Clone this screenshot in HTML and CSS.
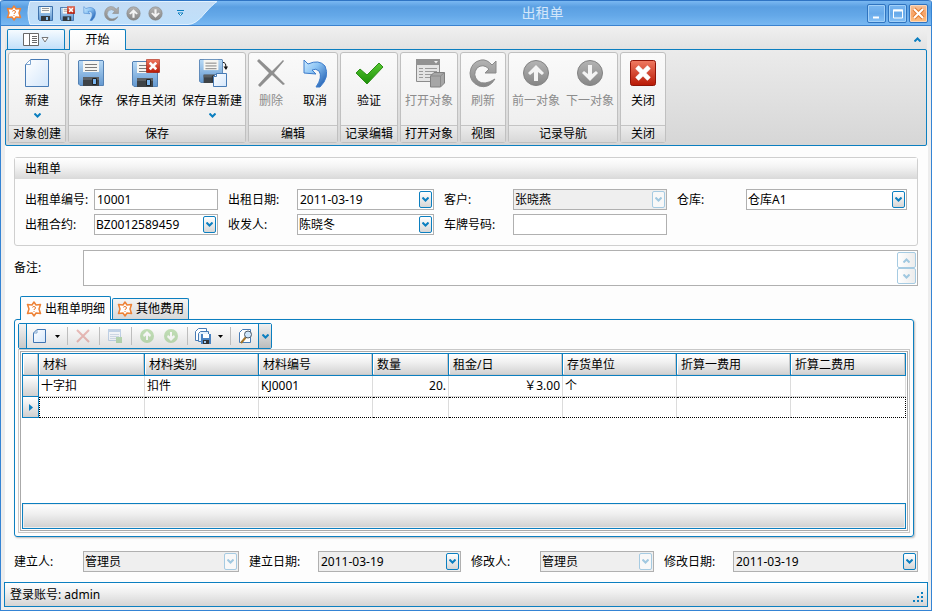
FILE: index.html
```html
<!DOCTYPE html>
<html lang="zh-CN">
<head>
    <meta charset="UTF-8">
    <meta name="viewport" content="width=device-width, initial-scale=1.0">
    <title>出租单</title>
    <link rel="stylesheet" href="styles.css">
</head>
<body>
    <svg class="sprite" aria-hidden="true">
        <defs>
            <linearGradient id="g-blue" x1="0" y1="0" x2="0" y2="1">
                <stop offset="0" stop-color="#b8daf6"/><stop offset="1" stop-color="#6398d0"/>
            </linearGradient>
            <linearGradient id="g-page" x1="0" y1="0" x2="1" y2="1">
                <stop offset="0" stop-color="#ffffff"/><stop offset="1" stop-color="#d3e6fb"/>
            </linearGradient>
            <linearGradient id="g-red" x1="0" y1="0" x2="0" y2="1">
                <stop offset="0" stop-color="#f07a62"/><stop offset="1" stop-color="#b81804"/>
            </linearGradient>
            <linearGradient id="g-gray" x1="0" y1="0" x2="0" y2="1">
                <stop offset="0" stop-color="#b4b4b4"/><stop offset="1" stop-color="#868686"/>
            </linearGradient>
            <linearGradient id="g-undo" x1="0" y1="0" x2="1" y2="1">
                <stop offset="0" stop-color="#d0ecff"/><stop offset=".4" stop-color="#8cc4f4"/><stop offset="1" stop-color="#1250a8"/>
            </linearGradient>
            <linearGradient id="g-green" x1="0" y1="0" x2="0" y2="1">
                <stop offset="0" stop-color="#58c832"/><stop offset="1" stop-color="#1c9008"/>
            </linearGradient>
            <linearGradient id="g-quick" x1="0" y1="0" x2="0" y2="1">
                <stop offset="0" stop-color="#c4dcf5"/><stop offset="1" stop-color="#bfe0fb"/>
            </linearGradient>
        </defs>
        <symbol id="i-disk" viewBox="0 0 26 26">
            <path d="M1 .5H25L25.5 1V25.5H2L.5 24V1Z" fill="url(#g-blue)" stroke="#5582b4"/>
            <path d="M5 1H21V12H5Z" fill="#f6f6f2"/>
            <path d="M7 4.500H19M7 7.500H19M7 10.500H19" stroke="#7c7c7c"/>
            <path d="M5 17H21V26H5Z" fill="#3e4347"/>
            <path d="M5 17H21V20H5Z" fill="#5b6064"/>
            <path d="M14.500 18.500H18.500V24.500H14.500Z" fill="#7ab6f0" stroke="#222"/>
        </symbol>
        <symbol id="i-disk-small" viewBox="0 0 15 15">
            <path d="M.5 .5H14.500V14.500H1.500L.5 13.500Z" fill="url(#g-blue)" stroke="#3f72ac"/>
            <path d="M3 1H12V7H3Z" fill="#fafaf6"/>
            <path d="M4 2.500H11M4 4.500H11" stroke="#9a9a9a"/>
            <path d="M3 10H12V15H3Z" fill="#33383d"/>
            <path d="M8 11H10V14H8Z" fill="#8cc4f4"/>
        </symbol>
        <symbol id="i-new" viewBox="0 0 32 32">
            <path d="M9.5 2.5H27.5V29.5H4.5V7.5Z" fill="url(#g-page)" stroke="#477bb5"/>
            <path d="M9.5 2.5V7.5H4.5Z" fill="#fff" stroke="#7da4cf"/>
        </symbol>
        <symbol id="i-redx" viewBox="0 0 26 26">
            <rect x=".5" y=".5" width="25" height="25" rx="2" fill="url(#g-red)" stroke="#8e1408"/>
            <path d="M7 7L19 19M19 7L7 19" stroke="#e8c9c6" stroke-width="5"/>
            <path d="M7 7L19 19M19 7L7 19" stroke="#fff" stroke-width="4"/>
        </symbol>
        <symbol id="i-save" viewBox="0 0 32 32">
            <use href="#i-disk" x="3" y="3" width="26" height="26"/>
        </symbol>
        <symbol id="i-save-close" viewBox="0 0 32 32">
            <use href="#i-disk" x="2" y="4" width="26" height="26"/>
            <use href="#i-redx" x="16" y="2" width="14" height="14"/>
        </symbol>
        <symbol id="i-save-new" viewBox="0 0 32 32">
            <use href="#i-disk" x="3" y="2" width="24" height="24"/>
            <path d="M20.5 16.5H30.5V29.5H17.5V19.5Z" fill="url(#g-page)" stroke="#477bb5"/>
            <path d="M20.5 16.5V19.5H17.5" fill="none" stroke="#477bb5"/>
            <path d="M27 5.5H28Q30 6 30 10V12" fill="none" stroke="#111"/>
            <path d="M27.5 9.5H32L30 13Z" fill="#111"/>
        </symbol>
        <symbol id="i-delete" viewBox="0 0 32 32">
            <path d="M4 2L17 14L28 3L29 4L19 16L30 27L28 28L17 18L5 30L3 28L14 16L2 4Z" fill="#8f8f8f"/>
        </symbol>
        <symbol id="i-undo" viewBox="0 0 32 32">
            <path d="M5 3L9 7Q20 2 26 9Q31 20 21 30H17Q24 20 20 14Q17 11 13 13L17 17L5 16Z" fill="url(#g-undo)" stroke="#3d7ccb"/>
        </symbol>
        <symbol id="i-check" viewBox="0 0 32 32">
            <path d="M3 16L7 12L14 18L26 6L30 10L14 27Z" fill="url(#g-green)" stroke="#2d8f18"/>
        </symbol>
        <symbol id="i-object" viewBox="0 0 32 32">
            <path d="M3.5 2.5H26.5V24.5H3.5Z" fill="#e4e4e4" stroke="#8c8c8c"/>
            <path d="M3 2H27V8H3Z" fill="#929292"/>
            <path d="M21 4H25L23 6.500Z" fill="#eee"/>
            <path d="M6 11.500H10M12 11.500H24M6 14.500H10M12 14.500H24M6 17.500H10M12 17.500H24M6 20.500H10M12 20.500H24" stroke="#9a9a9a"/>
            <path d="M17.500 19L21 15.500H31.500V26L27.500 30H17.500Z" fill="#a6a6a6" stroke="#808080"/>
            <path d="M17.500 19H27.500V30M27.500 19L31.500 15.500" fill="none" stroke="#8a8a8a"/>
        </symbol>
        <symbol id="i-refresh" viewBox="0 0 32 32">
            <path d="M29 4V16H18L22 12Q16 6 10 11Q5 18 11 24Q17 29 28 22Q22 32 12 29Q3 25 3 16Q4 5 14 3Q20 2 25 8Z" fill="url(#g-gray)" stroke="#8a8a8a"/>
        </symbol>
        <symbol id="i-up" viewBox="0 0 32 32">
            <circle cx="16" cy="16" r="12.500" fill="url(#g-gray)" stroke="#828282"/>
            <path d="M16 8L24 16L22 18L18 15V24H14V15L10 18L8 16Z" fill="#f4f4f4"/>
        </symbol>
        <symbol id="i-down" viewBox="0 0 32 32">
            <circle cx="16" cy="16" r="12.500" fill="url(#g-gray)" stroke="#828282"/>
            <path d="M16 24L24 16L22 14L18 17V8H14V17L10 14L8 16Z" fill="#f4f4f4"/>
        </symbol>
        <symbol id="i-close" viewBox="0 0 32 32">
            <use href="#i-redx" x="3" y="3" width="26" height="26"/>
        </symbol>
        <symbol id="i-star" viewBox="0 0 16 16">
            <path d="M8 1L10 4L14.500 3.500L13 8L14.500 12.500L10 12L8 15L6 12L1.500 12.500L3 8L1.500 3.500L6 4Z" fill="#fff" stroke="#ee8236" stroke-width="1.500" stroke-linejoin="round"/>
            <path d="M6.500 6.500Q6.500 5.500 8 5.500T9.500 7Q9.500 8 8 8.500V9M8 10V11" fill="none" stroke="#e87a30"/>
        </symbol>
        <symbol id="i-chevron" viewBox="0 0 7 5">
            <path d="M.5 .5L3.500 3.500L6.500 .5" fill="none" stroke="currentColor" stroke-width="2"/>
        </symbol>
        <symbol id="i-triangle" viewBox="0 0 5 3">
            <path d="M0 0H5L2.500 3Z" fill="currentColor"/>
        </symbol>
    </svg>

    <div class="window">
        <header class="titlebar">
            <svg class="icon-16 app-icon"><use href="#i-star"/></svg>
            <div class="quick">
                <svg class="quick-back" viewBox="0 0 191 24" aria-hidden="true">
                    <path d="M3 .5H190Q186 3 178 12Q169 23.500 161 23.500H3Q-1 12 3 .5Z" fill="url(#g-quick)" stroke="#e2f2ff"/>
                </svg>
                <button class="quick-button" title="保存"><svg width="15" height="15"><use href="#i-disk-small"/></svg></button>
                <button class="quick-button" title="保存且关闭">
                    <svg width="15" height="15" viewBox="0 0 15 15"><use href="#i-disk-small" y="1" width="14" height="14"/><use href="#i-redx" x="7" width="8" height="8"/></svg>
                </button>
                <button class="quick-button" title="取消"><svg class="quick-icon" viewBox="3 2 26 29"><use href="#i-undo" width="32" height="32"/></svg></button>
                <button class="quick-button" title="刷新" disabled><svg class="quick-icon" viewBox="2 2 28 28"><use href="#i-refresh" width="32" height="32"/></svg></button>
                <button class="quick-button" title="前一对象" disabled><svg class="quick-icon" viewBox="2 2 28 28"><use href="#i-up" width="32" height="32"/></svg></button>
                <button class="quick-button" title="下一对象" disabled><svg class="quick-icon" viewBox="2 2 28 28"><use href="#i-down" width="32" height="32"/></svg></button>
                <button class="quick-button quick-more" title="自定义">
                    <svg width="7" height="7" viewBox="0 0 7 7"><path d="M0 .5H7M1 3L3.500 5.500L6 3Z" fill="#fff" stroke="#0c7fc0"/></svg>
                </button>
            </div>
            <h1 class="title">出租单</h1>
            <div class="window-buttons">
                <button class="window-button" title="最小化">
                    <svg width="15" height="15"><path d="M4 11.500H10" stroke="#fff" stroke-width="2"/></svg>
                </button>
                <button class="window-button" title="最大化">
                    <svg width="15" height="15"><path d="M3.500 4H12.500V12H3.500Z" fill="none" stroke="#fff"/><path d="M3 4.500H13" stroke="#fff" stroke-width="2"/></svg>
                </button>
                <button class="window-button window-close" title="关闭">
                    <svg width="15" height="15"><path d="M3 3L12 12M12 3L3 12" stroke="#e07a30" stroke-width="4"/><path d="M3 3L12 12M12 3L3 12" stroke="#fff" stroke-width="2"/></svg>
                </button>
            </div>
        </header>

        <nav class="ribbon-tabs">
            <button class="app-menu" title="菜单">
                <svg width="16" height="13"><path d="M.5 .5H15.500V12.500H.5Z" fill="#fff" stroke="#686868"/><path d="M6.500 0V13M9 3.500H14M9 5.500H14M9 7.500H14M9 9.500H14" stroke="#686868"/></svg>
                <svg width="8" height="6"><path d="M1 .5H7L4 5Z" fill="#fff" stroke="#777"/></svg>
            </button>
            <button class="ribbon-tab">开始</button>
            <button class="collapse" title="折叠"><svg class="chevron flip"><use href="#i-chevron"/></svg></button>
        </nav>

        <section class="ribbon">
            <div class="ribbon-group">
                <div class="ribbon-items">
                    <button class="ribbon-button"><svg class="icon-32"><use href="#i-new"/></svg>新建<svg class="chevron"><use href="#i-chevron"/></svg></button>
                </div>
                <div class="ribbon-caption">对象创建</div>
            </div>
            <div class="ribbon-group">
                <div class="ribbon-items">
                    <button class="ribbon-button"><svg class="icon-32"><use href="#i-save"/></svg>保存</button>
                    <button class="ribbon-button"><svg class="icon-32"><use href="#i-save-close"/></svg>保存且关闭</button>
                    <button class="ribbon-button"><svg class="icon-32"><use href="#i-save-new"/></svg>保存且新建<svg class="chevron"><use href="#i-chevron"/></svg></button>
                </div>
                <div class="ribbon-caption">保存</div>
            </div>
            <div class="ribbon-group">
                <div class="ribbon-items">
                    <button class="ribbon-button" disabled><svg class="icon-32"><use href="#i-delete"/></svg>删除</button>
                    <button class="ribbon-button"><svg class="icon-32"><use href="#i-undo"/></svg>取消</button>
                </div>
                <div class="ribbon-caption">编辑</div>
            </div>
            <div class="ribbon-group">
                <div class="ribbon-items">
                    <button class="ribbon-button"><svg class="icon-32"><use href="#i-check"/></svg>验证</button>
                </div>
                <div class="ribbon-caption">记录编辑</div>
            </div>
            <div class="ribbon-group">
                <div class="ribbon-items">
                    <button class="ribbon-button" disabled><svg class="icon-32"><use href="#i-object"/></svg>打开对象</button>
                </div>
                <div class="ribbon-caption">打开对象</div>
            </div>
            <div class="ribbon-group">
                <div class="ribbon-items">
                    <button class="ribbon-button" disabled><svg class="icon-32"><use href="#i-refresh"/></svg>刷新</button>
                </div>
                <div class="ribbon-caption">视图</div>
            </div>
            <div class="ribbon-group">
                <div class="ribbon-items">
                    <button class="ribbon-button" disabled><svg class="icon-32"><use href="#i-up"/></svg>前一对象</button>
                    <button class="ribbon-button" disabled><svg class="icon-32"><use href="#i-down"/></svg>下一对象</button>
                </div>
                <div class="ribbon-caption">记录导航</div>
            </div>
            <div class="ribbon-group">
                <div class="ribbon-items">
                    <button class="ribbon-button"><svg class="icon-32"><use href="#i-close"/></svg>关闭</button>
                </div>
                <div class="ribbon-caption">关闭</div>
            </div>
        </section>

        <main class="content">
            <section class="group-box">
                <h2 class="group-title">出租单</h2>
                <div class="rent-fields">
                    <label class="label" for="number">出租单编号:</label>
                    <div class="editor"><input class="editor-value" type="text" id="number" value="10001"></div>
                    <label class="label" for="rent-date">出租日期:</label>
                    <div class="editor">
                        <input class="editor-value" type="text" id="rent-date" value="2011-03-19">
                        <button class="drop" title="选择日期"><svg class="chevron"><use href="#i-chevron"/></svg></button>
                    </div>
                    <label class="label" for="customer">客户:</label>
                    <div class="editor readonly off">
                        <select class="editor-value" id="customer" disabled><option>张晓燕</option></select>
                        <span class="drop"><svg class="chevron"><use href="#i-chevron"/></svg></span>
                    </div>
                    <label class="label" for="store">仓库:</label>
                    <div class="editor">
                        <select class="editor-value" id="store"><option>仓库A1</option></select>
                        <span class="drop"><svg class="chevron"><use href="#i-chevron"/></svg></span>
                    </div>
                    <label class="label" for="contract">出租合约:</label>
                    <div class="editor">
                        <select class="editor-value" id="contract"><option>BZ0012589459</option></select>
                        <span class="drop"><svg class="chevron"><use href="#i-chevron"/></svg></span>
                    </div>
                    <label class="label" for="sender">收发人:</label>
                    <div class="editor">
                        <select class="editor-value" id="sender"><option>陈晓冬</option></select>
                        <span class="drop"><svg class="chevron"><use href="#i-chevron"/></svg></span>
                    </div>
                    <label class="label" for="plate">车牌号码:</label>
                    <div class="editor"><input class="editor-value" type="text" id="plate"></div>
                </div>
            </section>

            <div class="memo-row">
                <label for="memo">备注:</label>
                <div class="memo">
                    <textarea class="memo-text" id="memo"></textarea>
                    <div class="memo-scroll">
                        <button class="memo-button" title="向上" disabled><svg class="chevron flip"><use href="#i-chevron"/></svg></button>
                        <button class="memo-button" title="向下" disabled><svg class="chevron"><use href="#i-chevron"/></svg></button>
                    </div>
                </div>
            </div>

            <div class="tabs">
                <button class="tab tab-active"><svg class="icon-16"><use href="#i-star"/></svg>出租单明细</button>
                <button class="tab"><svg class="icon-16"><use href="#i-star"/></svg>其他费用</button>
            </div>

            <section class="panel">
                <div class="toolbar">
                    <span class="toolbar-grip"></span>
                    <button class="tool" title="新建">
                        <svg class="icon-16" viewBox="0 0 16 16"><path d="M5 1.500H13.500V14.500H1.500V5Z" fill="url(#g-page)" stroke="#3f74b2"/><path d="M5 1.500V5H1.500" fill="none" stroke="#7da4cf"/></svg>
                    </button>
                    <button class="tool-drop" title="新建选项"><svg class="triangle"><use href="#i-triangle"/></svg></button>
                    <span class="toolbar-line"></span>
                    <button class="tool" title="删除" disabled>
                        <svg class="icon-16" viewBox="0 0 16 16"><path d="M2 2L14 14M14 2L2 14" stroke="#cc4a40" stroke-width="2"/></svg>
                    </button>
                    <span class="toolbar-line"></span>
                    <button class="tool" title="打开对象" disabled>
                        <svg class="icon-16" viewBox="0 0 16 16"><path d="M1.500 1.500H13.500V12.500H1.500Z" fill="#eef5ff" stroke="#5f8fca"/><path d="M1 2.500H14" stroke="#5f8fca" stroke-width="3"/><path d="M3 6.500H12M3 8.500H12M3 10.500H12" stroke="#8aa8cc"/><path d="M9 9H15V15H9Z" fill="#4aa238"/></svg>
                    </button>
                    <span class="toolbar-line"></span>
                    <button class="tool" title="前一对象" disabled>
                        <svg class="icon-16" viewBox="0 0 16 16"><circle cx="8" cy="8" r="7" fill="#5cae3c"/><path d="M8 3L12 7L11 9L9 7.500V12H7V7.500L5 9L4 7Z" fill="#fff"/></svg>
                    </button>
                    <button class="tool" title="下一对象" disabled>
                        <svg class="icon-16" viewBox="0 0 16 16"><circle cx="8" cy="8" r="7" fill="#5cae3c"/><path d="M8 13L12 9L11 7L9 8.500V4H7V8.500L5 7L4 9Z" fill="#fff"/></svg>
                    </button>
                    <span class="toolbar-line"></span>
                    <button class="tool" title="导出">
                        <svg class="icon-16" viewBox="0 0 16 16"><path d="M3.500 .5H11.500V12.500H.5V3.500Z" fill="#fff" stroke="#477bb5"/><path d="M5.500 3.500H13.500V13.500H3.500V5.500Z" fill="#e6f1fc" stroke="#477bb5"/><path d="M6 6H16V16H6Z" fill="#4a82c0"/><path d="M8 6H14V10H8Z" fill="#fff"/><path d="M8 12H14V16H8Z" fill="#333"/><path d="M9 13H11V15H9Z" fill="#9fc8f0"/></svg>
                    </button>
                    <button class="tool-drop" title="导出选项"><svg class="triangle"><use href="#i-triangle"/></svg></button>
                    <span class="toolbar-line"></span>
                    <button class="tool" title="预览">
                        <svg class="icon-16" viewBox="0 0 16 16"><path d="M4.500 1.500H12.500V14.500H1.500V4.500Z" fill="#fff" stroke="#477bb5"/><path d="M8 9L3 15" stroke="#a5752b" stroke-width="2"/><circle cx="10" cy="6.500" r="3.500" fill="#cfe6fb" stroke="#4d5865"/></svg>
                    </button>
                    <button class="toolbar-more" title="更多"><svg class="chevron"><use href="#i-chevron"/></svg></button>
                </div>

                <div class="grid-frame">
                    <div class="grid">
                        <div class="grid-rows">
                            <table class="grid-table">
                                <colgroup>
                                    <col class="col-mark"><col class="col-item"><col class="col-wide"><col class="col-wide">
                                    <col class="col-count"><col class="col-wide"><col class="col-wide"><col class="col-wide"><col>
                                </colgroup>
                                <thead>
                                    <tr>
                                        <th></th><th>材料</th><th>材料类别</th><th>材料编号</th><th>数量</th><th>租金/日</th><th>存货单位</th><th>折算一费用</th><th>折算二费用</th>
                                    </tr>
                                </thead>
                                <tbody>
                                    <tr>
                                        <td class="mark"></td><td>十字扣</td><td>扣件</td><td>KJ0001</td><td class="num">20.</td><td class="num">￥3.00</td><td>个</td><td></td><td></td>
                                    </tr>
                                    <tr class="focused">
                                        <td class="mark"><svg class="pointer" width="4" height="7"><path d="M0 0L4 3.500L0 7Z" fill="#0c7fc0"/></svg></td><td></td><td></td><td></td><td></td><td></td><td></td><td></td><td></td>
                                    </tr>
                                </tbody>
                            </table>
                        </div>
                        <div class="grid-footer"></div>
                    </div>
                </div>
            </section>

            <section class="audit-fields">
                <label for="creator">建立人:</label>
                <div class="editor readonly off">
                    <select class="editor-value" id="creator" disabled><option>管理员</option></select>
                    <span class="drop"><svg class="chevron"><use href="#i-chevron"/></svg></span>
                </div>
                <label class="label" for="created">建立日期:</label>
                <div class="editor readonly">
                    <input class="editor-value" type="text" id="created" value="2011-03-19" readonly>
                    <button class="drop" title="选择日期"><svg class="chevron"><use href="#i-chevron"/></svg></button>
                </div>
                <label class="label" for="editor">修改人:</label>
                <div class="editor readonly off">
                    <select class="editor-value" id="editor" disabled><option>管理员</option></select>
                    <span class="drop"><svg class="chevron"><use href="#i-chevron"/></svg></span>
                </div>
                <label class="label" for="edited">修改日期:</label>
                <div class="editor readonly">
                    <input class="editor-value" type="text" id="edited" value="2011-03-19" readonly>
                    <button class="drop" title="选择日期"><svg class="chevron"><use href="#i-chevron"/></svg></button>
                </div>
            </section>
        </main>

        <footer class="status">
            <span>登录账号: admin</span>
            <svg class="size-grip" width="11" height="11"><path d="M8 0h2v2h-2zM4 4h2v2h-2zM8 4h2v2h-2zM0 8h2v2h-2zM4 8h2v2h-2zM8 8h2v2h-2z" fill="#0c7fc0"/></svg>
        </footer>
    </div>
</body>
</html>
```
FILE: styles.css
```css
*
{
    box-sizing: border-box;
}

body
{
    margin: 0;
    font-family: "Noto Sans", "Noto Sans CJK SC", sans-serif;
    font-size: 12px;
    line-height: 16px;
    color: #000;
}

button, input, select, textarea
{
    font: inherit;
    color: inherit;
    margin: 0;
    padding: 0;
    border: none;
    background: none;
}

button
{
    display: flex;
    align-items: center;
    justify-content: center;
}

h1, h2
{
    margin: 0;
    font-weight: normal;
}

.sprite
{
    position: absolute;
    width: 0;
    height: 0;
}

.icon-16
{
    width: 16px;
    height: 16px;
    flex: none;
}

.icon-32
{
    width: 32px;
    height: 32px;
    flex: none;
    margin-bottom: 4px;
}

.chevron
{
    width: 7px;
    height: 5px;
    color: #0c7fc0;
    flex: none;
}

.flip
{
    transform: scaleY(-1);
}

.triangle
{
    width: 5px;
    height: 3px;
}

.window
{
    display: flex;
    flex-direction: column;
    min-height: 100vh;
    border: 1px solid #3584d4;
    border-top: none;
    border-radius: 3px 3px 0 0;
    background: #ededed;
}

/* title bar */

.titlebar
{
    display: flex;
    align-items: center;
    height: 26px;
    padding: 0 3px 0 5px;
    border-top: 1px solid #2f74c4;
    border-bottom: 1px solid #3b82cf;
    border-radius: 3px 3px 0 0;
    background: linear-gradient(#7ab8f2, #5a9fe2 25%, #64a8e8 60%, #78b8f2);
}

.quick
{
    position: relative;
    display: flex;
    align-items: center;
    width: 191px;
    height: 24px;
    margin-left: 5px;
    padding-left: 7px;
}

.quick-back
{
    position: absolute;
    left: 0;
    top: 0;
    width: 191px;
    height: 24px;
}

.quick-button
{
    position: relative;
    width: 22px;
    height: 22px;
}

.quick-icon
{
    width: 15px;
    height: 15px;
}

.quick-more
{
    margin-left: 3px;
}

.title
{
    flex: 1;
    text-align: center;
    font-size: 14px;
    line-height: 20px;
    color: #d2e6fa;
}

.window-buttons
{
    display: flex;
    gap: 2px;
}

.window-button
{
    width: 19px;
    height: 19px;
    border: 1px solid #2f74c0;
    border-radius: 2px;
    background: linear-gradient(#7ab6f0, #68aaea 50%, #84c0f6);
    box-shadow: inset 0 0 0 1px #a2d0f8;
}

.window-close
{
    background: linear-gradient(#f4c4a0, #f8a468 50%, #ffc080);
    box-shadow: inset 0 0 0 1px #fbd8bc;
}

/* ribbon */

.ribbon-tabs
{
    display: flex;
    align-items: flex-end;
    gap: 4px;
    height: 24px;
    margin: 0 4px -1px;
    padding-left: 2px;
    background: linear-gradient(#f0f0f0, #e2e2e2);
}

.app-menu
{
    gap: 2px;
    width: 58px;
    height: 20px;
    margin-bottom: 1px;
    border: 1px solid #0c7fc0;
    border-bottom: none;
    border-radius: 2px 2px 0 0;
    background: linear-gradient(#f6fbff, #c2e0fa);
}

.ribbon-tab
{
    position: relative;
    width: 57px;
    height: 21px;
    border: 1px solid #0c7fc0;
    border-bottom: none;
    border-radius: 2px 2px 0 0;
    background: linear-gradient(#ffffff, #f6f6f6);
}

.collapse
{
    width: 19px;
    height: 21px;
    margin-left: auto;
}

.ribbon
{
    display: flex;
    gap: 2px;
    margin: 0 4px;
    padding: 2px;
    border: 1px solid #0c7fc0;
    border-radius: 2px;
    background: linear-gradient(#ebebeb, #d6d6d6);
}

.ribbon-group
{
    border: 1px solid #c0c0c0;
    border-radius: 3px;
    background: linear-gradient(#fafafa, #ececec);
}

.ribbon-items
{
    display: flex;
    height: 72px;
}

.ribbon-button
{
    flex: 1 0 auto;
    flex-direction: column;
    justify-content: flex-start;
    min-width: 44px;
    padding: 4px 3px 0;
    white-space: nowrap;
}

.ribbon-button .chevron
{
    margin-top: 4px;
}

.ribbon-button:disabled
{
    color: #8c8c8c;
}

.ribbon-caption
{
    padding: 0 4px;
    border-top: 1px solid #c4c4c4;
    background: linear-gradient(#ececec, #d8d8d8);
    text-align: center;
    white-space: nowrap;
}

/* form */

.content
{
    flex: 1;
    display: flex;
    flex-direction: column;
    margin: 0 3px 0 4px;
    padding: 11px 10px 10px 9px;
    background: #fdfdfd;
}

.group-box
{
    border: 1px solid #cfcfcf;
    border-radius: 3px;
}

.group-title
{
    padding: 3px 10px 2px;
    background: linear-gradient(#ffffff, #f4f4f4 40%, #d9d9d9);
    font-size: 12px;
    line-height: 16px;
}

.rent-fields, .audit-fields
{
    display: grid;
    align-items: center;
    row-gap: 4px;
}

.rent-fields
{
    grid-template-columns: 79px 124fr 79px 137fr 79px 154fr 79px 161fr;
    padding: 10px 10px 10px 0;
}

.label
{
    padding-left: 10px;
    white-space: nowrap;
}

.editor
{
    position: relative;
    display: flex;
    height: 21px;
    min-width: 0;
    border: 1px solid #b0b0b0;
    background: #fff;
}

.editor-value
{
    flex: 1;
    min-width: 0;
    height: 19px;
    padding: 0 17px 0 2px;
    appearance: none;
    border-radius: 0;
    outline: none;
}

select.editor-value
{
    padding-left: 1px;
}

.editor-value:disabled
{
    opacity: 1;
    color: #000;
}

.readonly
{
    background: #efefef;
}

.drop
{
    position: absolute;
    right: 1px;
    top: 1px;
    display: flex;
    align-items: center;
    justify-content: center;
    width: 13px;
    height: 17px;
    border: 1px solid #0c7fc0;
    border-radius: 2px;
    background: linear-gradient(#ffffff, #d6d6d6);
}

span.drop
{
    pointer-events: none;
}

.off .drop
{
    border-color: #a6cbe2;
    background: #f8f8f8;
}

.off .chevron, .memo-button .chevron
{
    color: #a0c8e0;
}

.memo-row
{
    display: grid;
    grid-template-columns: 69px 1fr;
    align-items: center;
    margin-top: 4px;
}

.memo
{
    display: flex;
    height: 36px;
    padding: 1px;
    border: 1px solid #b0b0b0;
    background: #fff;
}

.memo-text
{
    flex: 1;
    resize: none;
    outline: none;
}

.memo-scroll
{
    display: flex;
    flex-direction: column;
    width: 19px;
}

.memo-button
{
    flex: 1;
    border: 1px solid #a6cbe2;
    border-radius: 2px;
    background: linear-gradient(90deg, #ffffff, #ececec);
}

/* detail tabs */

.tabs
{
    display: flex;
    align-items: flex-end;
    gap: 1px;
    margin: 10px 0 -1px 6px;
}

.tab
{
    gap: 3px;
    height: 21px;
    margin-bottom: 1px;
    padding: 0 4px;
    border: 1px solid #0c7fc0;
    border-bottom: none;
    border-radius: 2px 2px 0 0;
    background: linear-gradient(#f4f4f4, #d8d8d8);
    white-space: nowrap;
}

.tab-active
{
    position: relative;
    height: 24px;
    margin-bottom: 0;
    padding: 0 5px;
    background: #fdfdfd;
}

.panel
{
    flex: 1;
    display: flex;
    flex-direction: column;
    margin-right: 4px;
    padding: 3px;
    border: 1px solid #0c7fc0;
    border-radius: 3px;
    box-shadow: 1px 1px 2px #b8b8b8;
}

.toolbar
{
    display: flex;
    align-items: center;
    align-self: flex-start;
    height: 26px;
    border: 1px solid #0c7fc0;
    border-radius: 2px;
    background: linear-gradient(#ffffff, #e0e0e0);
}

.toolbar-grip
{
    width: 8px;
    height: 24px;
    margin-right: 1px;
    border-right: 1px solid #0c7fc0;
    background: linear-gradient(#f4f4f4, #c8c8c8);
}

.tool
{
    width: 24px;
    height: 24px;
}

.tool:disabled
{
    opacity: 0.35;
}

.tool-drop
{
    width: 11px;
    height: 24px;
}

.toolbar-line
{
    width: 1px;
    height: 18px;
    margin: 0 3px 0 4px;
    background: #bdbdbd;
}

.toolbar-more
{
    width: 13px;
    height: 24px;
    border-left: 1px solid #0c7fc0;
    background: linear-gradient(#f0f0f0, #bcbcbc);
}

/* the grid sits in two thin frames */

.grid-frame
{
    flex: 1;
    display: flex;
    padding: 1px;
    border: 1px solid #c8c8c8;
}

.grid
{
    flex: 1;
    display: flex;
    flex-direction: column;
    min-width: 0;
    padding: 1px;
    border: 1px solid #aaa;
    background: #fff;
}

.grid-rows
{
    flex: 1;
}

.grid-table
{
    width: 100%;
    table-layout: fixed;
    border-spacing: 0;
}

.col-mark
{
    width: 17px;
}

.col-item
{
    width: 106px;
}

.col-wide
{
    width: 114px;
}

.col-count
{
    width: 76px;
}

.grid-table th
{
    height: 23px;
    padding: 0 4px;
    border: 1px solid #0c7fc0;
    border-left: none;
    background: linear-gradient(#ffffff, #f0f0f0 40%, #d0d0d0);
    font-weight: normal;
    text-align: left;
    box-shadow: inset -1px -1px #c8c8c8, inset 1px 1px #fff;
}

.grid-table th:first-child
{
    border-left: 1px solid #0c7fc0;
}

.grid-table td
{
    height: 21px;
    padding: 0 2px;
    border-right: 1px solid #dcdcdc;
    border-bottom: 1px solid #dcdcdc;
}

.grid-table .num
{
    text-align: right;
}

.grid-table .mark
{
    border: 1px solid #0c7fc0;
    border-top: none;
    background: linear-gradient(#ffffff, #d0d0d0);
    text-align: center;
    line-height: 0;
}

.pointer
{
    display: inline-block;
}

.grid-table .focused td:not(.mark)
{
    border-top: 1px dotted #000;
    border-bottom: 1px dotted #000;
}

.grid-table .focused td:nth-child(2)
{
    border-left: 1px dotted #000;
}

.grid-table .focused td:last-child
{
    border-right: 1px dotted #000;
}

.grid-footer
{
    height: 26px;
    border: 1px solid #0c7fc0;
    background: linear-gradient(#ffffff, #f0f0f0 40%, #d0d0d0);
    box-shadow: inset 0 0 0 1px #eee;
}

.audit-fields
{
    grid-template-columns: 69px 156fr 79px 143fr 79px 114fr 79px 185fr;
    margin-top: 14px;
}

.status
{
    display: flex;
    align-items: center;
    height: 25px;
    margin: 0 3px 3px;
    padding: 0 3px 0 5px;
    border: 1px solid #0c7fc0;
    background: linear-gradient(#ffffff, #f0f0f0 40%, #d4d4d4);
}

.size-grip
{
    align-self: flex-end;
    margin: 0 0 3px auto;
}
```
